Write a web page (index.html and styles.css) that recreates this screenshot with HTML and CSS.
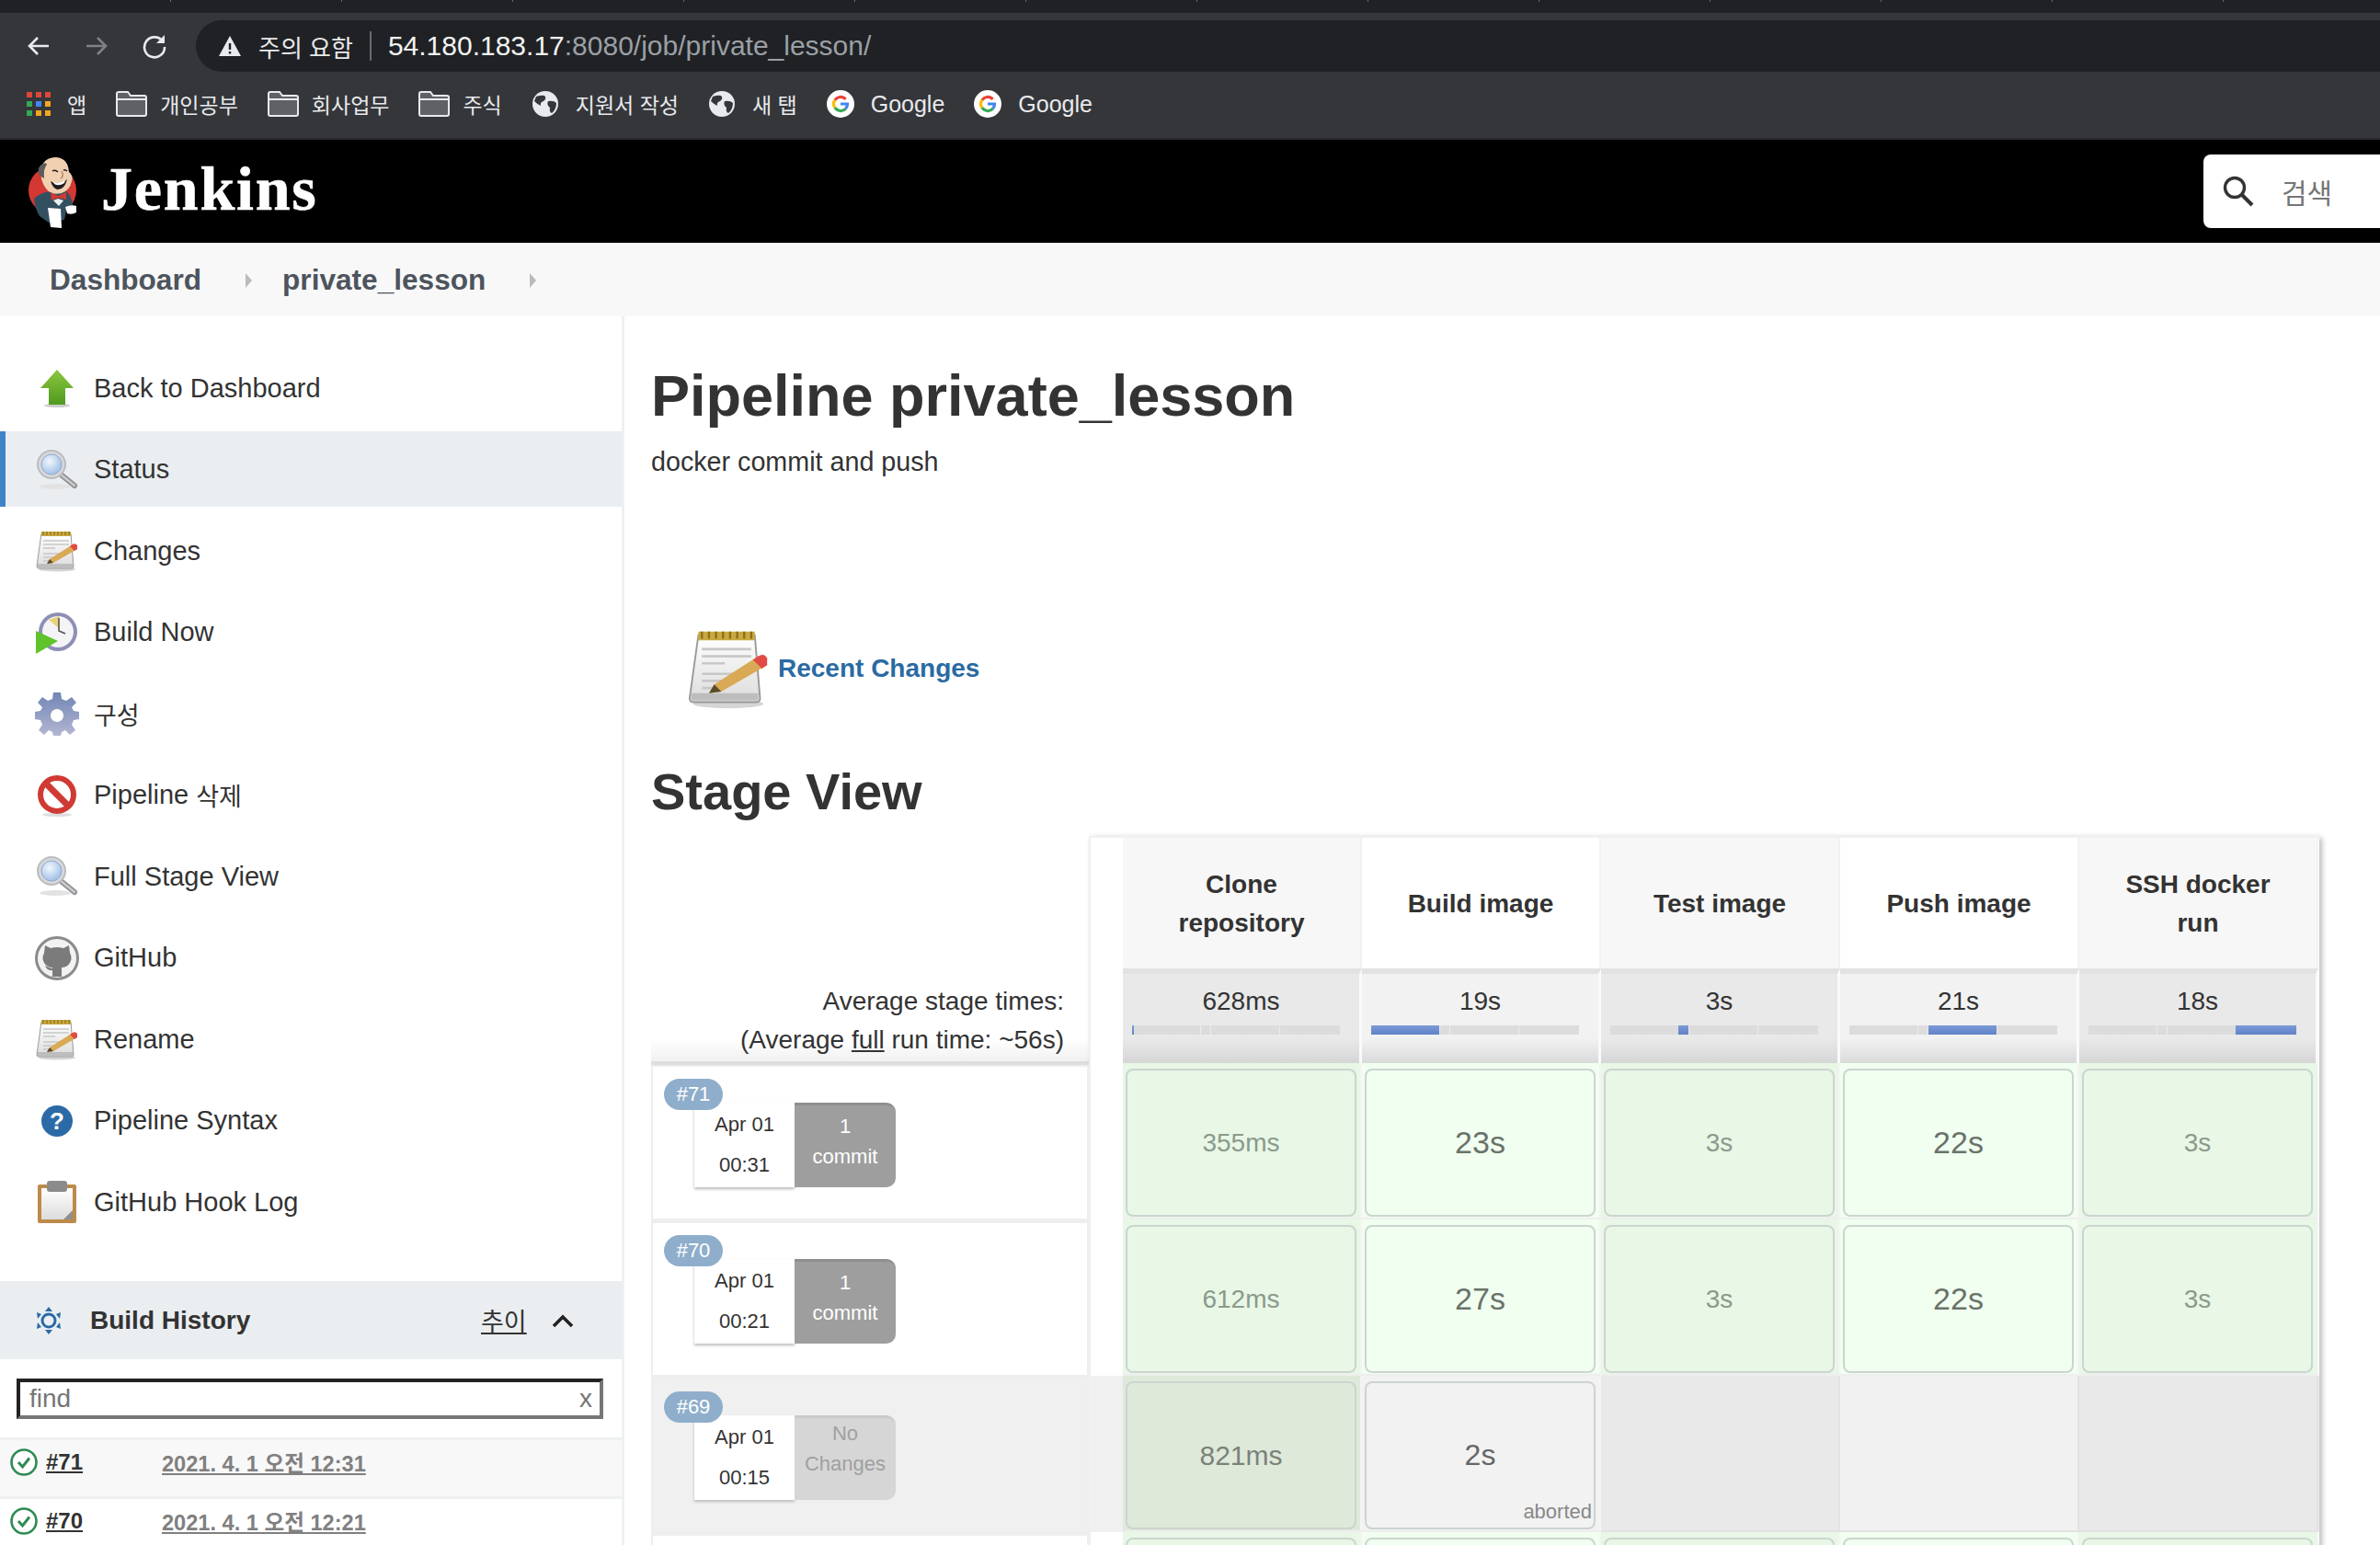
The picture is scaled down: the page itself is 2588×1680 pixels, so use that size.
FILE: index.html
```html
<!DOCTYPE html>
<html lang="ko">
<head>
  <meta charset="UTF-8">
  <title>private_lesson [Jenkins]</title>
  <link rel="stylesheet" href="styles.css">
</head>
<body>

<!-- shared icons -->
<svg class="icon-defs" aria-hidden="true">
  <defs>
    <linearGradient id="g-arrow" x1="0" y1="0" x2="0" y2="1"><stop offset="0" stop-color="#8cc63f"/><stop offset="1" stop-color="#4f9a1f"/></linearGradient>
    <radialGradient id="g-lens" cx="0.4" cy="0.35" r="0.7"><stop offset="0" stop-color="#f2f7fd"/><stop offset="1" stop-color="#9dbde6"/></radialGradient>
    <linearGradient id="g-page" x1="0" y1="0" x2="0" y2="1"><stop offset="0" stop-color="#ffffff"/><stop offset="1" stop-color="#dcdcdc"/></linearGradient>
    <linearGradient id="g-gear" x1="0" y1="0" x2="0" y2="1"><stop offset="0" stop-color="#6f86b5"/><stop offset="1" stop-color="#b4b6d2"/></linearGradient>
    <symbol id="i-up" viewBox="0 0 48 48">
      <ellipse cx="24" cy="43" rx="14" ry="2" fill="#ccc"/>
      <path d="M24 4 L42 24 H33 V42 H15 V24 H6 Z" fill="url(#g-arrow)"/>
    </symbol>
    <symbol id="i-search" viewBox="0 0 48 48">
      <ellipse cx="22" cy="42" rx="17" ry="3" fill="#e2e2e2"/>
      <path d="M27 28 L43 41" stroke="#8d8f92" stroke-width="6" stroke-linecap="round"/>
      <path d="M27 28 L43 41" stroke="#c9cbce" stroke-width="2.5" stroke-linecap="round"/>
      <circle cx="18" cy="18" r="15" fill="#d8d8d8" stroke="#b9bcc0" stroke-width="2"/>
      <circle cx="18" cy="18" r="11" fill="url(#g-lens)" stroke="#8fa9cf" stroke-width="1"/>
    </symbol>
    <symbol id="i-notes" viewBox="0 0 48 48">
      <ellipse cx="24" cy="44" rx="20" ry="2.5" fill="#d5d5d5"/>
      <path d="M7 5 H39 L42 41 Q42 43 40 43 H4 Q2 43 2 41 Z" fill="url(#g-page)" stroke="#9a9a9a" stroke-width="1"/>
      <path d="M3 38 H41 V42 H3 Z" fill="#bdbdbd"/>
      <path d="M7 3 H39 V8 H7 Z" fill="#c9a93f"/>
      <path d="M9 3 V7 M13 3 V7 M17 3 V7 M21 3 V7 M25 3 V7 M29 3 V7 M33 3 V7 M37 3 V7" stroke="#8a6f1e" stroke-width="1.2"/>
      <path d="M9 13 H37 M9 17 H37 M9 21 H22 M9 27 H30 M9 31 H24 M9 35 H20" stroke="#c8c8c8" stroke-width="1.4"/>
      <path d="M16 33 L41 17 L46 22 L20 37 L13 38 Z" fill="#d9a955"/>
      <path d="M38 19 L41 17 Q44 15 46 18 L46 22 L43 24 Z" fill="#e24a45"/>
      <path d="M16 33 L20 37 L13 38 Z" fill="#5a4a2c"/>
    </symbol>
    <symbol id="i-clock" viewBox="0 0 48 48">
      <circle cx="25" cy="23" r="21" fill="#8d8fb5"/>
      <circle cx="25" cy="23" r="17" fill="#f4f4f6"/>
      <path d="M15 10 L26 6 L27 20 Z" fill="#e8d27a"/>
      <path d="M26 8 V22 L33 25" fill="none" stroke="#555" stroke-width="1.6"/>
      <path d="M1 22 L25 33 L1 47 Z" fill="#5fc32c"/>
    </symbol>
    <symbol id="i-gear" viewBox="0 0 48 48">
      <path fill="url(#g-gear)" fill-rule="evenodd" d="M20 1 H28 L29 8 L34 10 L40 6 L45 12 L40 17 L42 21 L48 22 V30 L42 31 L40 36 L44 42 L38 47 L33 42 L29 44 L28 48 H20 L19 44 L15 42 L10 47 L4 42 L8 36 L6 31 L0 30 V22 L6 21 L8 17 L3 12 L8 6 L14 10 L19 8 Z M24 19 A7 7 0 1 0 24.01 19 Z"/>
    </symbol>
    <symbol id="i-stop" viewBox="0 0 48 48">
      <ellipse cx="24" cy="45" rx="16" ry="2" fill="#ddd"/>
      <circle cx="24" cy="23" r="18" fill="#fff" stroke="#d03a34" stroke-width="6"/>
      <path d="M11 10 L37 36" stroke="#d03a34" stroke-width="7"/>
    </symbol>
    <symbol id="i-github" viewBox="0 0 48 48">
      <circle cx="24" cy="24" r="22.5" fill="#f2f2f2" stroke="#8b8b8b" stroke-width="3"/>
      <path fill="#7b7b7b" d="M11 10 L17 13 Q24 11 31 13 L37 10 L38 18 Q41 24 38 29 Q35 34 29 34 V44 H19 V37 Q13 38 11 32 L15 34 L19 35 V34 Q13 34 10 29 Q7 24 10 18 Z"/>
    </symbol>
    <symbol id="i-help" viewBox="0 0 48 48">
      <circle cx="24" cy="24" r="17" fill="#2b6aa6"/>
      <text x="24" y="33" text-anchor="middle" class="help-mark">?</text>
    </symbol>
    <symbol id="i-clip" viewBox="0 0 48 48">
      <rect x="3" y="5" width="42" height="42" rx="2" fill="#bd8a4a"/>
      <rect x="7" y="9" width="34" height="34" fill="url(#g-page)"/>
      <path d="M41 33 V43 H31 Z" fill="#8f8f8f"/>
      <rect x="13" y="1" width="22" height="12" rx="3" fill="#8b8b8b"/>
    </symbol>
    <symbol id="i-folder" viewBox="0 0 34 28">
      <path d="M1 3 Q1 1 3 1 H13 L16 5 H31 Q33 5 33 7 V25 Q33 27 31 27 H3 Q1 27 1 25 Z" fill="#5f6166" stroke="#e8eaed" stroke-width="2"/>
      <path d="M1 9 H33" stroke="#e8eaed" stroke-width="2"/>
    </symbol>
    <symbol id="i-globe" viewBox="0 0 30 30">
      <circle cx="15" cy="15" r="14" fill="#e8eaed"/>
      <path d="M5 7 Q11 5 14 6 Q17 9 13 12 Q9 13 10 17 Q7 16 3 12 Z M18 12 Q24 11 27 14 Q27 21 22 25 Q19 24 20 19 Q16 16 18 12 Z" fill="#35363a"/>
    </symbol>
    <symbol id="i-google" viewBox="0 0 32 32">
      <circle cx="16" cy="16" r="16" fill="#fff"/>
      <path d="M9.5 11.5 A8 8 0 0 1 22 10.5" fill="none" stroke="#ea4335" stroke-width="3.4"/>
      <path d="M9.5 11.5 A8 8 0 0 0 9.5 20.5" fill="none" stroke="#fbbc05" stroke-width="3.4"/>
      <path d="M9.5 20.5 A8 8 0 0 0 22 21.5" fill="none" stroke="#34a853" stroke-width="3.4"/>
      <path d="M22 21.5 A8 8 0 0 0 24 16 H16" fill="none" stroke="#4285f4" stroke-width="3.4"/>
    </symbol>
    <symbol id="i-ok" viewBox="0 0 30 30">
      <circle cx="15" cy="15" r="13.5" fill="#fff" stroke="#2f8a55" stroke-width="2.6"/>
      <path d="M9 15 L13.5 20 L21 10.5" fill="none" stroke="#2f8a55" stroke-width="3"/>
    </symbol>
  </defs>
</svg>

<div class="browser-bar">
  <div class="tab-strip"></div>
  <div class="toolbar">
    <svg class="nav-icon" viewBox="0 0 28 28"><path d="M25 14 H5 M13 5 L4 14 L13 23" fill="none" stroke="#e8eaed" stroke-width="2.6"/></svg>
    <svg class="nav-icon" viewBox="0 0 28 28"><path d="M3 14 H23 M15 5 L24 14 L15 23" fill="none" stroke="#7f8185" stroke-width="2.6"/></svg>
    <svg class="nav-icon" viewBox="0 0 28 28"><path d="M23 9 A11 11 0 1 0 25 15" fill="none" stroke="#e8eaed" stroke-width="2.6"/><path d="M25 2 V11 H16 Z" fill="#e8eaed"/></svg>
    <div class="address">
      <svg class="warn-icon" viewBox="0 0 26 24"><path d="M13 1 L25 23 H1 Z" fill="#e8eaed"/><path d="M13 9 V16 M13 18 V20.5" stroke="#202124" stroke-width="2.4"/></svg>
      <span class="warn-text">주의 요함</span>
      <span class="address-sep"></span>
      <span class="url">54.180.183.17<span class="url-dim">:8080/job/private_lesson/</span></span>
    </div>
  </div>
  <div class="bookmarks">
    <a class="bookmark bookmark-apps">
      <svg class="apps-icon" viewBox="0 0 26 26">
        <path d="M0 0h6v6h-6zM10 0h6v6h-6zM20 0h6v6h-6z" fill="#e0453a"/>
        <path d="M0 10h6v6h-6z" fill="#34a853"/><path d="M10 10h6v6h-6z" fill="#4285f4"/><path d="M20 10h6v6h-6z" fill="#f2a51f"/>
        <path d="M0 20h6v6h-6z" fill="#34a853"/><path d="M10 20h6v6h-6z" fill="#f2a51f"/><path d="M20 20h6v6h-6z" fill="#f2a51f"/>
      </svg>앱</a>
    <a class="bookmark"><svg class="bm-icon"><use href="#i-folder"/></svg>개인공부</a>
    <a class="bookmark"><svg class="bm-icon"><use href="#i-folder"/></svg>회사업무</a>
    <a class="bookmark"><svg class="bm-icon"><use href="#i-folder"/></svg>주식</a>
    <a class="bookmark"><svg class="bm-icon bm-round"><use href="#i-globe"/></svg>지원서 작성</a>
    <a class="bookmark"><svg class="bm-icon bm-round"><use href="#i-globe"/></svg>새 탭</a>
    <a class="bookmark latin"><svg class="bm-icon bm-round"><use href="#i-google"/></svg>Google</a>
    <a class="bookmark latin"><svg class="bm-icon bm-round"><use href="#i-google"/></svg>Google</a>
  </div>
</div>

<header class="jenkins-header">
  <div class="logo">
    <svg class="logo-mark" viewBox="0 0 80 95">
      <circle cx="37" cy="46" r="26" fill="#d33833"/>
      <path d="M17 55 Q24 48 35 47 L52 47 Q58 52 59 62 L52 68 L50 78 L33 81 L23 74 Q18 66 17 55 Z" fill="#335061"/>
      <path d="M24 24 Q27 10 41 10 Q54 11 55 26 Q60 30 58 36 Q56 46 47 49 Q36 52 30 44 Q24 36 24 24 Z" fill="#f0d0b0"/>
      <path d="M23 30 Q19 20 27 17 Q30 15 31 18 Q27 22 28 33 Z" fill="#5b5b5e"/>
      <path d="M35 36 Q44 42 53 34 Q50 46 42 45 Q37 43 35 36 Z" fill="#231f20"/>
      <path d="M38 37 Q44 40 51 35 L50 38 Q44 42 39 39 Z" fill="#fff"/>
      <path d="M37 25 Q40 23 43 26 M49 24 Q51 23 53 25" fill="none" stroke="#231f20" stroke-width="1.5"/>
      <path d="M47 25 Q50 31 46 33" fill="none" stroke="#b8875f" stroke-width="1.4"/>
      <path d="M35 48 L43 52 L52 48 L52 56 L43 54 L36 57 Z" fill="#d33833"/>
      <path d="M38 57 L43 55 L49 57 L44 63 Z" fill="#e8eef2"/>
      <path d="M32 65 L46 66 L47 87 L35 86 Z" fill="#fff"/>
      <path d="M51 64 Q58 61 63 63 L63 70 Q58 73 53 71 Z" fill="#fff"/>
    </svg>
    <span class="logo-text">Jenkins</span>
  </div>
  <div class="search-box">
    <svg class="search-icon" viewBox="0 0 36 36"><circle cx="14" cy="14" r="10.5" fill="none" stroke="#333" stroke-width="3.4"/><path d="M22 22 L33 33" stroke="#333" stroke-width="4"/></svg>
    <span class="search-text">검색</span>
  </div>
</header>

<nav class="breadcrumbs">
  <a>Dashboard</a><span class="crumb-arrow"></span>
  <a>private_lesson</a><span class="crumb-arrow"></span>
</nav>

<div class="page">
  <aside class="sidebar">
    <ul class="tasks">
      <li class="task"><svg class="task-icon"><use href="#i-up"/></svg>Back to Dashboard</li>
      <li class="task active"><svg class="task-icon"><use href="#i-search"/></svg>Status</li>
      <li class="task"><svg class="task-icon"><use href="#i-notes"/></svg>Changes</li>
      <li class="task"><svg class="task-icon"><use href="#i-clock"/></svg>Build Now</li>
      <li class="task"><svg class="task-icon"><use href="#i-gear"/></svg><span class="ko">구성</span></li>
      <li class="task"><svg class="task-icon"><use href="#i-stop"/></svg>Pipeline&nbsp;<span class="ko">삭제</span></li>
      <li class="task"><svg class="task-icon"><use href="#i-search"/></svg>Full Stage View</li>
      <li class="task"><svg class="task-icon"><use href="#i-github"/></svg>GitHub</li>
      <li class="task"><svg class="task-icon"><use href="#i-notes"/></svg>Rename</li>
      <li class="task"><svg class="task-icon"><use href="#i-help"/></svg>Pipeline Syntax</li>
      <li class="task"><svg class="task-icon"><use href="#i-clip"/></svg>GitHub Hook Log</li>
    </ul>

    <div class="history-head">
      <svg class="history-icon" viewBox="0 0 30 32">
        <circle cx="15" cy="16" r="7" fill="none" stroke="#2b6aa6" stroke-width="3"/>
        <path d="M15 1 L19 6 H11 Z M15 31 L11 26 H19 Z M2 7 L7 9 L3 14 Z M28 7 L27 14 L23 9 Z M2 25 L3 18 L7 23 Z M28 25 L23 23 L27 18 Z" fill="#2b6aa6"/>
      </svg>
      <span class="history-title">Build History</span>
      <a class="history-trend">추이</a>
      <svg class="history-toggle" viewBox="0 0 24 16"><path d="M2 14 L12 4 L22 14" fill="none" stroke="#222" stroke-width="3.6"/></svg>
    </div>
    <div class="history-find">
      <div class="find-input"><span>find</span><span>x</span></div>
    </div>
    <div class="history-row shaded">
      <svg class="ok-icon"><use href="#i-ok"/></svg>
      <a class="build-no">#71</a>
      <a class="build-time">2021. 4. 1 오전 12:31</a>
    </div>
    <div class="history-row">
      <svg class="ok-icon"><use href="#i-ok"/></svg>
      <a class="build-no">#70</a>
      <a class="build-time">2021. 4. 1 오전 12:21</a>
    </div>
  </aside>

  <main class="content">
    <h1 class="job-title">Pipeline private_lesson</h1>
    <p class="job-desc">docker commit and push</p>

    <div class="recent-changes">
      <svg class="recent-icon"><use href="#i-notes"/></svg>
      <a>Recent Changes</a>
    </div>

    <h2 class="stage-heading">Stage View</h2>

    <div class="stage-view">
      <div class="stage-left">
        <div class="avg-label">
          <div>Average stage times:</div>
          <div>(Average <u>full</u> run time: ~56s)</div>
        </div>

        <div class="build-row">
          <span class="badge">#71</span>
          <div class="build-card">
            <div class="build-date"><span>Apr 01</span><span>00:31</span></div>
            <div class="build-commits"><span>1</span><span>commit</span></div>
          </div>
        </div>
        <div class="build-row">
          <span class="badge">#70</span>
          <div class="build-card">
            <div class="build-date"><span>Apr 01</span><span>00:21</span></div>
            <div class="build-commits"><span>1</span><span>commit</span></div>
          </div>
        </div>
        <div class="build-row dimmed">
          <span class="badge">#69</span>
          <div class="build-card">
            <div class="build-date"><span>Apr 01</span><span>00:15</span></div>
            <div class="build-commits none"><span>No</span><span>Changes</span></div>
          </div>
        </div>
        <div class="build-row"></div>
      </div>

      <div class="stage-grid">
        <div class="grid-row head-row">
          <div class="spacer"></div>
          <div class="col-head odd">Clone<br>repository</div>
          <div class="col-head">Build image</div>
          <div class="col-head odd">Test image</div>
          <div class="col-head">Push image</div>
          <div class="col-head odd">SSH docker<br>run</div>
        </div>
        <div class="grid-row avg-row">
          <div class="spacer"></div>
          <div class="avg-cell odd">628ms<div class="avg-bar"><i style="left:0;width:1%"></i></div></div>
          <div class="avg-cell">19s<div class="avg-bar"><i style="left:0;width:32.8%"></i></div></div>
          <div class="avg-cell odd">3s<div class="avg-bar"><i style="left:32.8%;width:5%"></i></div></div>
          <div class="avg-cell">21s<div class="avg-bar"><i style="left:38%;width:32.8%"></i></div></div>
          <div class="avg-cell odd">18s<div class="avg-bar"><i style="left:71%;width:29%"></i></div></div>
        </div>

        <div class="grid-row">
          <div class="spacer"></div>
          <div class="cell odd"><div class="box">355ms</div></div>
          <div class="cell"><div class="box">23s</div></div>
          <div class="cell odd"><div class="box">3s</div></div>
          <div class="cell"><div class="box">22s</div></div>
          <div class="cell odd"><div class="box">3s</div></div>
        </div>
        <div class="grid-row">
          <div class="spacer"></div>
          <div class="cell odd"><div class="box">612ms</div></div>
          <div class="cell"><div class="box">27s</div></div>
          <div class="cell odd"><div class="box">3s</div></div>
          <div class="cell"><div class="box">22s</div></div>
          <div class="cell odd"><div class="box">3s</div></div>
        </div>
        <div class="grid-row dimmed">
          <div class="spacer"></div>
          <div class="cell odd"><div class="box">821ms</div></div>
          <div class="cell"><div class="box aborted">2s<span class="box-note">aborted</span></div></div>
          <div class="cell odd empty"></div>
          <div class="cell empty"></div>
          <div class="cell odd empty"></div>
        </div>
        <div class="grid-row">
          <div class="spacer"></div>
          <div class="cell odd"><div class="box"></div></div>
          <div class="cell"><div class="box"></div></div>
          <div class="cell odd"><div class="box"></div></div>
          <div class="cell"><div class="box"></div></div>
          <div class="cell odd"><div class="box"></div></div>
        </div>
      </div>
    </div>
  </main>
</div>

</body>
</html>
```

FILE: styles.css
```css
* {
  box-sizing: border-box;
  margin: 0;
  padding: 0;
}

html, body {
  height: 1680px;
  overflow: hidden;
}

body {
  font-family: "Liberation Sans", "Noto Sans CJK KR", sans-serif;
  font-size: 28px;
  color: #333;
  background: #fff;
}

.icon-defs {
  position: absolute;
  width: 0;
  height: 0;
}

.help-mark {
  font-family: "Liberation Sans", sans-serif;
  font-size: 26px;
  font-weight: bold;
  fill: #fff;
}

/* browser chrome */
.browser-bar {
  height: 152px;
  background: #35363a;
  border-bottom: 2px solid #2a2b2e;
}

.tab-strip {
  height: 14px;
  background: #202124;
  background-image: repeating-linear-gradient(90deg, transparent 0, transparent 185px, #6a6b6e 185px, #6a6b6e 186px);
  background-size: 100% 2px;
  background-repeat: no-repeat;
  background-position: 0 0;
}

.toolbar {
  height: 72px;
  display: flex;
  align-items: center;
  padding: 0 0 0 28px;
}

.nav-icon {
  width: 28px;
  height: 28px;
  margin-right: 35px;
}

.address {
  flex: 1;
  height: 56px;
  margin: 0 0 0 -4px;
  padding-left: 24px;
  display: flex;
  align-items: center;
  background: #202124;
  border-radius: 28px 0 0 28px;
}

.warn-icon {
  width: 26px;
  height: 24px;
  margin-right: 18px;
}

.warn-text {
  font-size: 26px;
  color: #e8eaed;
}

.address-sep {
  width: 2px;
  height: 32px;
  margin: 0 18px;
  background: #6a6b6e;
}

.url {
  font-size: 30px;
  color: #f1f3f4;
}

.url-dim {
  color: #9aa0a6;
}

.bookmarks {
  height: 54px;
  display: flex;
  align-items: center;
  padding-left: 29px;
  gap: 32px;
}

.bookmark {
  display: flex;
  align-items: center;
  font-size: 23px;
  color: #e8eaed;
}

.bookmark.latin {
  font-size: 25px;
}

.apps-icon {
  width: 26px;
  height: 26px;
  margin-right: 18px;
}

.bm-icon {
  width: 34px;
  height: 28px;
  margin-right: 14px;
}

.bm-round {
  width: 30px;
  height: 30px;
  margin-right: 18px;
}

/* jenkins header */
.jenkins-header {
  height: 112px;
  background: #000;
  display: flex;
  align-items: center;
  justify-content: space-between;
}

.logo {
  display: flex;
  align-items: center;
  padding-left: 20px;
}

.logo-mark {
  width: 80px;
  height: 95px;
}

.logo-text {
  margin: -5px 0 0 10px;
  font-family: "Liberation Serif", serif;
  font-size: 68px;
  font-weight: bold;
  letter-spacing: 1.8px;
  color: #fff;
  -webkit-text-stroke: 0.6px #fff;
}

.search-box {
  width: 192px;
  height: 80px;
  display: flex;
  align-items: center;
  padding-left: 20px;
  background: #fff;
  border-radius: 8px 0 0 8px;
}

.search-icon {
  width: 36px;
  height: 36px;
  margin-right: 29px;
}

.search-text {
  font-size: 30px;
  color: #757575;
}

/* breadcrumb */
.breadcrumbs {
  height: 80px;
  display: flex;
  align-items: center;
  padding: 1px 0 0 54px;
  background: #f8f8f8;
  font-size: 31.6px;
  font-weight: bold;
  color: #4d545d;
}

.crumb-arrow {
  width: 0;
  height: 0;
  margin: 0 33px 0 48px;
  border-left: 7px solid #bbb;
  border-top: 8px solid transparent;
  border-bottom: 8px solid transparent;
}

/* sidebar */
.page {
  display: flex;
  height: 1336px;
  overflow: hidden;
}

.sidebar {
  width: 679px;
  height: 1336px;
  flex: none;
  border-right: 3px solid #eef1f4;
}

.tasks {
  list-style: none;
  padding-top: 36px;
}

.task {
  height: 82px;
  margin-bottom: 6.5px;
  padding: 2px 0 0 38px;
  display: flex;
  align-items: center;
  font-size: 29px;
  color: #333;
}

.task.active {
  background: #eaeef1;
  border-left: 6px solid #4083c7;
  padding-left: 32px;
}

.ko {
  font-size: 27px;
}

.task-icon {
  width: 48px;
  height: 48px;
  margin-right: 16px;
}

.history-head {
  height: 85px;
  margin-top: 46px;
  padding-left: 38px;
  display: flex;
  align-items: center;
  background: #eaeef1;
}

.history-icon {
  width: 30px;
  height: 32px;
  margin-right: 30px;
}

.history-title {
  font-weight: bold;
  font-size: 28px;
  width: 425px;
}

.history-trend {
  font-size: 27px;
  text-decoration: underline;
  width: 77px;
}

.history-toggle {
  width: 24px;
  height: 16px;
}

.history-find {
  height: 85px;
  padding: 21px 20px 0 18px;
}

.find-input {
  height: 44px;
  padding: 0 8px 0 10px;
  display: flex;
  align-items: center;
  justify-content: space-between;
  border: 4px solid #767676;
  border-top-color: #222;
  border-left-color: #222;
  font-size: 28px;
  color: #757575;
}

.history-row {
  height: 64px;
  padding: 0 0 14px 11px;
  display: flex;
  align-items: center;
  border-top: 3px solid #eef0f2;
  font-size: 24px;
  font-weight: bold;
}

.history-row.shaded {
  background: #f8f8f8;
}

.ok-icon {
  width: 30px;
  height: 30px;
  margin-right: 9px;
}

.build-no {
  width: 126px;
  color: #333;
  text-decoration: underline;
}

.build-time {
  font-size: 23.6px;
  color: #808080;
  text-decoration: underline;
}

/* main */
.content {
  flex: 1;
  padding: 0 0 0 29px;
}

.job-title {
  margin-top: 51px;
  font-size: 63px;
  line-height: 70px;
  font-weight: bold;
}

.job-desc {
  margin-top: 19px;
  font-size: 28.7px;
  line-height: 36px;
}

.recent-changes {
  margin: 163px 0 0 38px;
  height: 88px;
  display: flex;
  align-items: center;
  font-size: 28px;
  font-weight: bold;
  color: #2a6aa3;
}

.recent-icon {
  width: 92px;
  height: 92px;
  margin-right: 8px;
}

.stage-heading {
  margin-top: 58px;
  font-size: 56px;
  line-height: 64px;
  font-weight: bold;
}

.stage-view {
  display: flex;
  margin-top: 16px;
}

.stage-left {
  width: 476px;
  flex: none;
}

.avg-label {
  height: 249px;
  padding: 159px 27px 0 0;
  text-align: right;
  line-height: 42px;
  border-bottom: 4px solid #ddd;
  background: linear-gradient(180deg, #fff 90%, #f1f1f1 100%);
}

.build-row {
  position: relative;
  height: 170px;
  padding: 39px 0 0 45px;
  border: 2px solid #eee;
  border-bottom-width: 3px;
  background: #fff;
}

.build-row.dimmed {
  background: #f0f0f0;
}

.badge {
  position: absolute;
  left: 12px;
  top: 13px;
  width: 64px;
  height: 34px;
  border-radius: 17px;
  background: #8faecb;
  color: #fff;
  font-size: 22px;
  line-height: 34px;
  text-align: center;
}

.build-card {
  display: flex;
  width: 219px;
  height: 92px;
}

.build-date {
  width: 109px;
  display: flex;
  flex-direction: column;
  justify-content: space-around;
  padding: 2px 0;
  text-align: center;
  background: #fff;
  box-shadow: 0 2px 3px #bbb;
  font-size: 22px;
}

.build-commits {
  width: 110px;
  display: flex;
  flex-direction: column;
  justify-content: center;
  gap: 7px;
  padding-bottom: 10px;
  text-align: center;
  background: #9e9e9e;
  border-top: 3px solid #8f8f8f;
  border-radius: 0 10px 10px 0;
  color: #fff;
  font-size: 22px;
}

.build-commits.none {
  gap: 7px;
  padding-bottom: 22px;
  background: #d6d6d6;
  border-top-color: #cacaca;
  color: #a0a0a0;
}

/* stage grid */
.stage-grid {
  width: 1338px;
  flex: none;
  border: 2px solid #eef1f4;
  border-right: 0;
  box-shadow: 3px 2px 6px #bbb;
}

.grid-row {
  display: grid;
  grid-template-columns: 35px repeat(5, 260px);
  height: 170px;
}

.grid-row.dimmed {
  background: #f0f0f0;
}

.head-row {
  height: 142px;
}

.avg-row {
  height: 103px;
}

.col-head {
  display: flex;
  align-items: center;
  justify-content: center;
  padding: 2px 30px 0;
  text-align: center;
  font-size: 28px;
  font-weight: bold;
  line-height: 42px;
  border-right: 2px solid #f2f2f2;
  background: #fff;
}

.col-head.odd {
  background: #f7f7f7;
}

.avg-cell {
  padding-top: 12px;
  text-align: center;
  font-size: 28px;
  line-height: 36px;
  border-top: 6px solid #e2e2e2;
  border-right: 3px solid #fafafa;
  background: linear-gradient(180deg, #f2f2f2 72%, #dadada 100%);
}

.avg-cell.odd {
  background: linear-gradient(180deg, #e9e9e9 72%, #d6d6d6 100%);
}

.avg-bar {
  position: relative;
  width: 226px;
  height: 10px;
  margin: 8px 0 0 10px;
  background: linear-gradient(90deg, #dcdcdc 32.6%, #ececec 32.6%, #ececec 33.4%, #dcdcdc 33.4%, #dcdcdc 37.4%, #ececec 37.4%, #ececec 38.2%, #dcdcdc 38.2%, #dcdcdc 70.6%, #ececec 70.6%, #ececec 71.4%, #dcdcdc 71.4%);
}

.avg-bar i {
  position: absolute;
  top: 0;
  bottom: 0;
  background: linear-gradient(180deg, #7d9ad6, #5f82c8);
}

.cell {
  padding: 6px 4px 1px 3px;
  background: #f0fff0;
  border-right: 2px solid #f4f4f4;
  border-bottom: 2px solid #eee;
}

.cell.odd {
  background: #e8f7e6;
}

.box {
  position: relative;
  height: 100%;
  display: flex;
  align-items: center;
  justify-content: center;
  border: 2px solid #ccd4d0;
  border-radius: 8px;
  background: #f0fff0;
  font-size: 34px;
  color: #6a726a;
}

.cell.odd .box {
  background: #e8f7e6;
  font-size: 28px;
  color: #8b9a8b;
}

.dimmed .cell.odd {
  background: #dee9da;
}

.dimmed .cell.odd .box {
  background: #dee9da;
  font-size: 30px;
  color: #7b827b;
}

.dimmed .cell {
  background: #f2f2f2;
}

.box.aborted {
  background: #f2f2f2;
  color: #666;
  font-size: 32px;
}

.box-note {
  position: absolute;
  right: 2px;
  bottom: 4px;
  font-size: 22px;
  color: #888;
}

.dimmed .cell.empty {
  background: #f1f1f1;
  border-right-color: #e2e2e2;
  border-bottom-color: #e2e2e2;
}

.dimmed .cell.odd.empty {
  background: #e9e9e9;
}
```
